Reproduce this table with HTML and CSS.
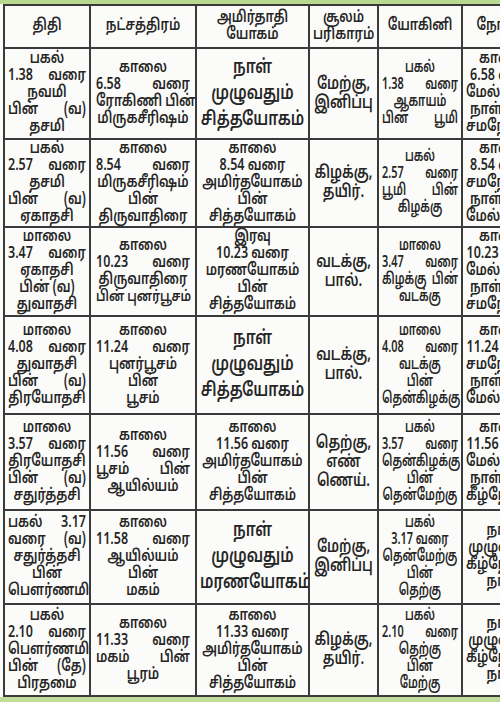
FILE: index.html
```html
<!DOCTYPE html>
<html lang="ta">
<head>
<meta charset="utf-8">
<link rel="stylesheet" href="styles.css">
</head>
<body>
<div class="page">
  <div class="band top"></div>
  <div class="clip">
    <table class="pan">
      <colgroup>
        <col class="c1"><col class="c2"><col class="c3"><col class="c4"><col class="c5"><col class="c6">
      </colgroup>
      <tr class="hd">
        <th><div class="w">திதி</div></th>
        <th><div class="w">நட்சத்திரம்</div></th>
        <th><div class="w"><div>அமிர்தாதி</div><div>யோகம்</div></div></th>
        <th class="sm"><div class="w"><div>சூலம்</div><div>பரிகாரம்</div></div></th>
        <th><div class="w">யோகினி</div></th>
        <th><div class="w">நோக்கு</div></th>
      </tr>
      <tr class="r1">
        <td><div class="w"><div>பகல்</div><div class="j">1.38 வரை</div><div>நவமி</div><div class="j">பின் (வ)</div><div>தசமி</div></div></td>
        <td class="nk"><div class="w"><div>காலை</div><div class="j">6.58 வரை</div><div class="j">ரோகிணி பின்</div><div>மிருகசீரிஷம்</div></div></td>
        <td class="wide"><div class="w"><div>நாள்</div><div>முழுவதும்</div><div>சித்தயோகம்</div></div></td>
        <td class="sm"><div class="w"><div>மேற்கு,</div><div>இனிப்பு</div></div></td>
        <td class="yo"><div class="w"><div>பகல்</div><div class="j">1.38 வரை</div><div>ஆகாயம்</div><div class="j">பின் பூமி</div></div></td>
        <td><div class="w"><div>காலை</div><div>6.58 வரை</div><div>மேல்நோக்கு</div><div>நாள் பின்</div><div>சமநோக்கு</div></div></td>
      </tr>
      <tr class="r2">
        <td><div class="w"><div>பகல்</div><div class="j">2.57 வரை</div><div>தசமி</div><div class="j">பின் (வ)</div><div>ஏகாதசி</div></div></td>
        <td class="nk"><div class="w"><div>காலை</div><div class="j">8.54 வரை</div><div>மிருகசீரிஷம்</div><div>பின்</div><div>திருவாதிரை</div></div></td>
        <td><div class="w"><div>காலை</div><div>8.54 வரை</div><div>அமிர்தயோகம்</div><div>பின்</div><div>சித்தயோகம்</div></div></td>
        <td class="sm"><div class="w"><div>கிழக்கு,</div><div>தயிர்.</div></div></td>
        <td class="yo"><div class="w"><div>பகல்</div><div class="j">2.57 வரை</div><div class="j">பூமி பின்</div><div>கிழக்கு</div></div></td>
        <td><div class="w"><div>காலை</div><div>8.54 வரை</div><div>சமநோக்கு</div><div>நாள் பின்</div><div>மேல்நோக்கு</div></div></td>
      </tr>
      <tr class="r3">
        <td><div class="w"><div>மாலை</div><div class="j">3.47 வரை</div><div>ஏகாதசி</div><div>பின் (வ)</div><div>துவாதசி</div></div></td>
        <td class="nk"><div class="w"><div>காலை</div><div class="j">10.23 வரை</div><div>திருவாதிரை</div><div class="tight">பின் புனர்பூசம்</div></div></td>
        <td><div class="w"><div>இரவு</div><div>10.23 வரை</div><div>மரணயோகம்</div><div>பின்</div><div>சித்தயோகம்</div></div></td>
        <td class="sm"><div class="w"><div>வடக்கு,</div><div>பால்.</div></div></td>
        <td class="yo"><div class="w"><div>மாலை</div><div class="j">3.47 வரை</div><div class="j">கிழக்கு பின்</div><div>வடக்கு</div></div></td>
        <td><div class="w"><div>காலை</div><div>10.23 வரை</div><div>மேல்நோக்கு</div><div>நாள் பின்</div><div>சமநோக்கு</div></div></td>
      </tr>
      <tr class="r4">
        <td><div class="w"><div>மாலை</div><div class="j">4.08 வரை</div><div>துவாதசி</div><div class="j">பின் (வ)</div><div>திரயோதசி</div></div></td>
        <td class="nk"><div class="w"><div>காலை</div><div class="j">11.24 வரை</div><div>புனர்பூசம்</div><div>பின்</div><div>பூசம்</div></div></td>
        <td class="wide"><div class="w"><div>நாள்</div><div>முழுவதும்</div><div>சித்தயோகம்</div></div></td>
        <td class="sm"><div class="w"><div>வடக்கு,</div><div>பால்.</div></div></td>
        <td class="yo"><div class="w"><div>மாலை</div><div class="j">4.08 வரை</div><div>வடக்கு</div><div>பின்</div><div>தென்கிழக்கு</div></div></td>
        <td><div class="w"><div>காலை</div><div>11.24 வரை</div><div>சமநோக்கு</div><div>நாள் பின்</div><div>மேல்நோக்கு</div></div></td>
      </tr>
      <tr class="r5">
        <td><div class="w"><div>மாலை</div><div class="j">3.57 வரை</div><div>திரயோதசி</div><div class="j">பின் (வ)</div><div>சதுர்த்தசி</div></div></td>
        <td class="nk"><div class="w"><div>காலை</div><div class="j">11.56 வரை</div><div class="j">பூசம் பின்</div><div>ஆயில்யம்</div></div></td>
        <td><div class="w"><div>காலை</div><div>11.56 வரை</div><div>அமிர்தயோகம்</div><div>பின்</div><div>சித்தயோகம்</div></div></td>
        <td class="sm"><div class="w"><div>தெற்கு,</div><div>எண்</div><div>ணெய்.</div></div></td>
        <td class="yo"><div class="w"><div>பகல்</div><div class="j">3.57 வரை</div><div>தென்கிழக்கு</div><div>பின்</div><div>தென்மேற்கு</div></div></td>
        <td><div class="w"><div>காலை</div><div>11.56 வரை</div><div>மேல்நோக்கு</div><div>நாள் பின்</div><div>கீழ்நோக்கு</div></div></td>
      </tr>
      <tr class="r6">
        <td><div class="w"><div class="j">பகல் 3.17</div><div class="j">வரை (வ)</div><div>சதுர்த்தசி</div><div>பின்</div><div>பௌர்ணமி</div></div></td>
        <td class="nk"><div class="w"><div>காலை</div><div class="j">11.58 வரை</div><div>ஆயில்யம்</div><div>பின்</div><div>மகம்</div></div></td>
        <td class="wide"><div class="w"><div>நாள்</div><div>முழுவதும்</div><div>மரணயோகம்</div></div></td>
        <td class="sm"><div class="w"><div>மேற்கு,</div><div>இனிப்பு</div></div></td>
        <td class="yo"><div class="w"><div>பகல்</div><div>3.17 வரை</div><div>தென்மேற்கு</div><div>பின்</div><div>தெற்கு</div></div></td>
        <td><div class="w"><div>நாள்</div><div>முழுவதும்</div><div>கீழ்நோக்கு</div><div>நாள்</div></div></td>
      </tr>
      <tr class="r7">
        <td><div class="w"><div>பகல்</div><div class="j">2.10 வரை</div><div>பௌர்ணமி</div><div class="j">பின் (தே)</div><div>பிரதமை</div></div></td>
        <td class="nk"><div class="w"><div>காலை</div><div class="j">11.33 வரை</div><div class="j">மகம் பின்</div><div>பூரம்</div></div></td>
        <td><div class="w"><div>காலை</div><div>11.33 வரை</div><div>அமிர்தயோகம்</div><div>பின்</div><div>சித்தயோகம்</div></div></td>
        <td class="sm"><div class="w"><div>கிழக்கு,</div><div>தயிர்.</div></div></td>
        <td class="yo"><div class="w"><div>பகல்</div><div class="j">2.10 வரை</div><div>தெற்கு</div><div>பின்</div><div>மேற்கு</div></div></td>
        <td><div class="w"><div>நாள்</div><div>முழுவதும்</div><div>கீழ்நோக்கு</div><div>நாள்</div></div></td>
      </tr>
    </table>
  </div>
  <div class="band bottom"></div>
</div>
</body>
</html>
```

FILE: styles.css
```css
html, body {
  margin: 0;
  padding: 0;
  background: #fbfbf9;
}
.page {
  width: 500px;
  height: 702px;
  overflow: hidden;
  display: flex;
  flex-direction: column;
  background: #fbfbf9;
}
.band {
  flex: none;
  background: #b8d98f;
}
.band.top { height: 4px; }
.band.bottom { flex: 1; background: #bfdd98; }
.clip {
  flex: none;
  width: 500px;
  overflow: hidden;
  padding-left: 3px;
}
.pan {
  border-collapse: collapse;
  table-layout: fixed;
  width: 540px;
  font-family: "Noto Sans Tamil", "Lohit Tamil", "Noto Sans", sans-serif;
  font-size: 16px;
  line-height: 17px;
  color: #262626;
}
.c1 { width: 86px; }
.c2 { width: 106px; }
.c3 { width: 113px; }
.c4 { width: 69px; }
.c5 { width: 84px; }
.c6 { width: 82px; }
.pan th, .pan td {
  border: 2px solid #3a3a3a;
  text-align: center;
  vertical-align: middle;
  padding: 0 3px;
  overflow: hidden;
  white-space: nowrap;
}
.pan th { font-weight: 600; }
.pan td { font-weight: 600; }
.w {
  width: 128.2%;
  transform: scaleX(0.78);
  transform-origin: 0 50%;
}
.pan td.nk { padding: 0 5px; }
.pan .yo .w {
  width: 147%;
  transform: scaleX(0.68);
}
.tight { font-size: 15px; }
.hd { height: 43px; }
.r1 { height: 91px; }
.r2 { height: 88px; }
.r3 { height: 89px; }
.r4 { height: 98px; }
.r5 { height: 96px; }
.r6 { height: 94px; }
.r7 { height: 92px; }
.j {
  text-align: justify;
  text-align-last: justify;
}
.pan td.wide {
  font-size: 19px;
  line-height: 26px;
}
.pan .sm {
  font-size: 17px;
  line-height: 19px;
}
.pan th.sm {
  font-size: 16px;
  line-height: 17px;
}
```
